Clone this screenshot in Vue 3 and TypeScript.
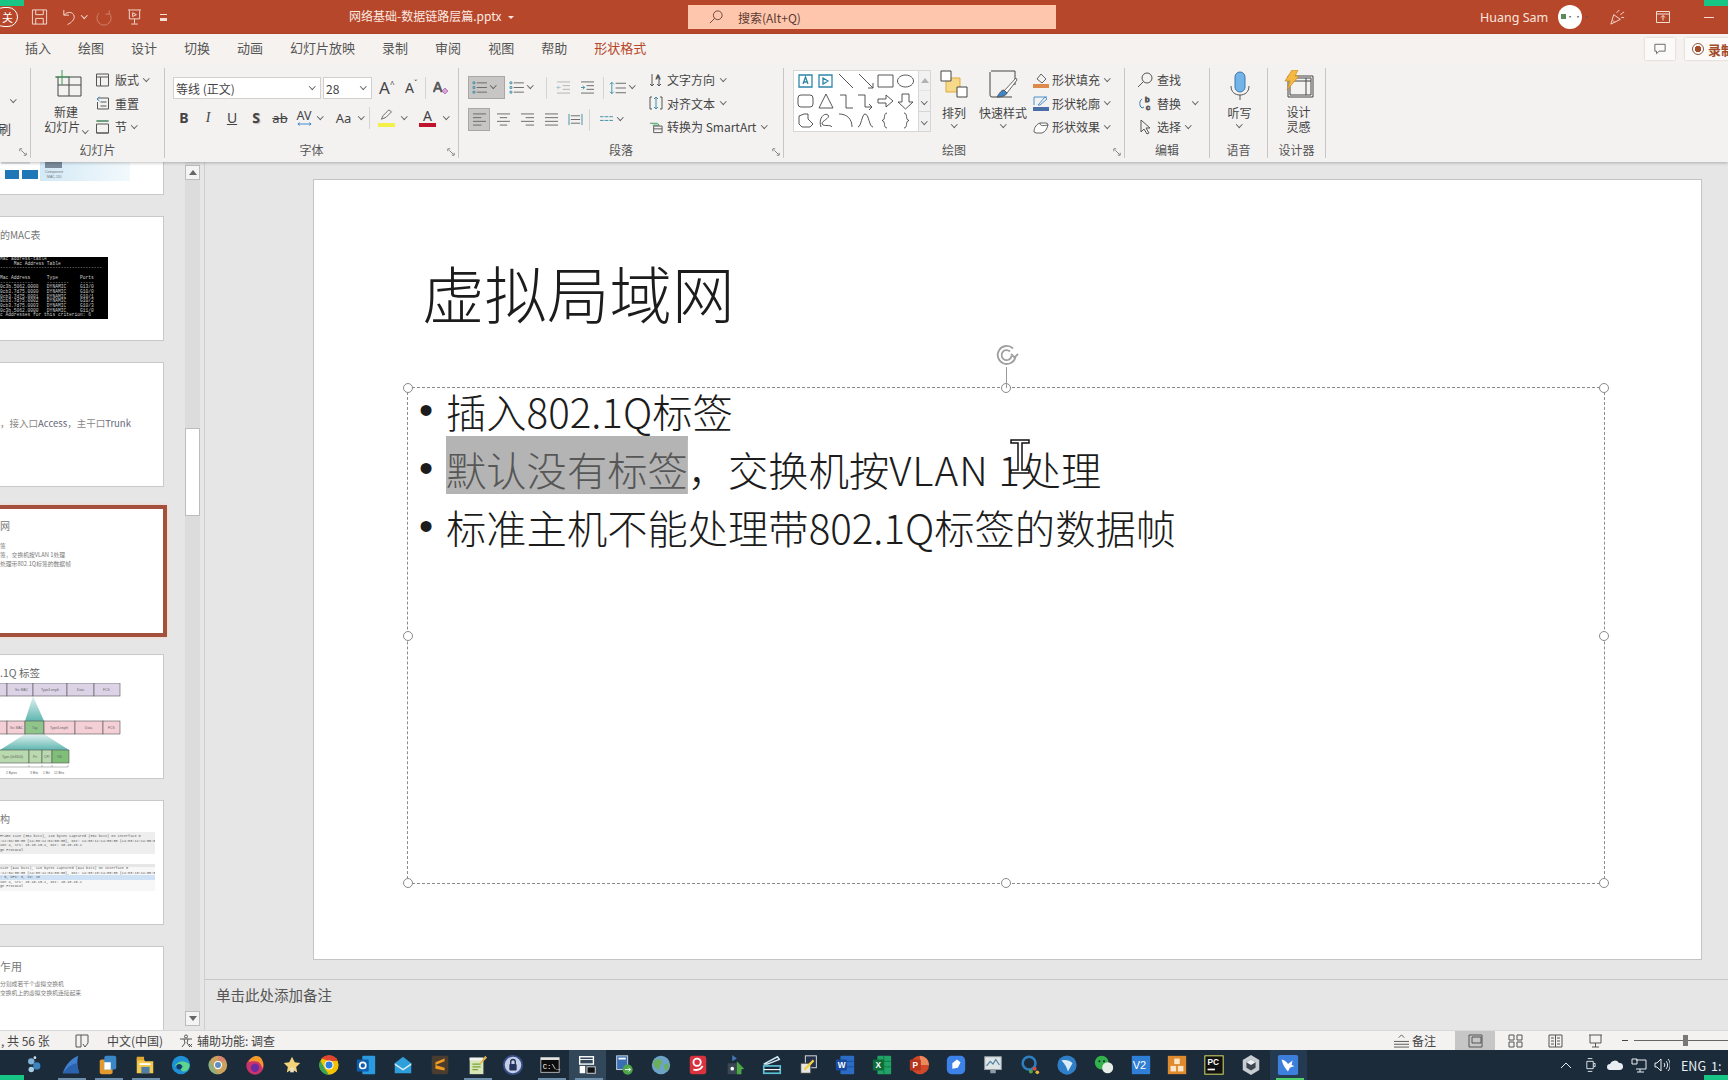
<script setup lang="ts">
const tabs = ['插入', '绘图', '设计', '切换', '动画', '幻灯片放映', '录制', '审阅', '视图', '帮助']

// 形状库，每格 20x19
const shapes = [
  'M3 3h13v12H3z M7 12l2.500-7 2.500 7 M8 10h3', 'M3 3h13v12H3z M7 6l5 3-5 3z', 'M3 2l14 14', 'M3 2l14 14 M12 16h5v-5', 'M2 3h15v12H2z', 'M9.500 3a8 6 0 1 0 .01 0z',
  'M5 3h9a3 3 0 0 1 3 3v6a3 3 0 0 1-3 3H5a3 3 0 0 1-3-3V6a3 3 0 0 1 3-3z', 'M10 2l7 14H3z', 'M4 3h6v13h7', 'M2 3h7v12h6 M13 12l3 3-3 3', 'M2 7h8V3l7 6-7 6v-4H2z', 'M6 2h7v8h4l-7.500 7L2 10h4z',
  'M3 5l5-2h4v5l5 5-3 3H6l-3-3z', 'M5 16C2 8 8 1 12 4c3 3-7 6-6 9 2 3 8 0 10 3', 'M3 3c8 0 13 5 13 13', 'M2 16C5 16 6 3 9 3c4 0 4 13 8 13', 'M11 2C7 2 10 9 6 9.500c4 .5 1 7.500 5 7.500', 'M8 2c4 0 1 7 5 7.500-4 .5-1 7.500-5 7.500',
]

const handles = [
  [0, 0], [50, 0], [100, 0], [0, 50], [100, 50], [0, 100], [50, 100], [100, 100],
]

const terminal = [
  'Mac address-table', '     Mac Address Table', '-------------------------------------',
  '', 'Mac Address      Type        Ports', '------------     --------    -----',
  '0c3b.5062.0000   DYNAMIC     G13/0', '0cb3.7d75.0000   DYNAMIC     G10/0', '0cb3.7d75.0001   DYNAMIC     G10/1',
  '0cb3.7d75.0002   DYNAMIC     G10/2', '0cb3.7d75.0003   DYNAMIC     G10/3', '0c3b.5062.0000   DYNAMIC     G11/0',
  'c Addresses for this criterion: 6',
]

// 任务栏图标，x 位置由 flex 顺序决定
const taskIcons: { body: string; run?: boolean; active?: boolean }[] = [
  { body: '<rect x="3" y="5" width="5" height="5" fill="#5c8fc0"/><rect x="3" y="13" width="5" height="5" fill="#3f77ad"/>' },
  { body: '<circle cx="9" cy="8" r="3.500" fill="#7fb2d9"/><circle cx="15" cy="13" r="4" fill="#3d83bd"/><circle cx="9" cy="17" r="3" fill="#a8cde6"/><circle cx="13" cy="4" r="1.500" fill="#d8e8f0"/>' },
  { run: true, body: '<path d="M3 21C6 12 12 5 20 2c-2 6-1 13 1 19z" fill="#3f7fd0"/><path d="M3 21c5-7 10-10 15-11l3 11z" fill="#2a62ad"/>' },
  { run: true, body: '<rect x="3" y="6" width="14" height="16" rx="2" fill="#e29a2e"/><rect x="8" y="2" width="13" height="15" rx="2" fill="#3b86c6"/><rect x="8" y="9" width="7" height="8" fill="#fff"/>' },
  { run: true, body: '<path d="M3 5h7l2 3h9v13H3z" fill="#f2c94c"/><rect x="3" y="3" width="8" height="4" fill="#e0a82e"/><rect x="8" y="14" width="9" height="7" fill="#4f7fa8"/><rect x="6" y="10" width="12" height="2" fill="#fff"/>' },
  { body: '<circle cx="12" cy="12" r="10" fill="#1f8fd6"/><path d="M5 14c2-6 11-8 16-3 1 5-3 9-7 8-3-1-3-5 1-5-3-3-7-3-10 0z" fill="#5fd68a"/><circle cx="10" cy="14" r="3" fill="#123a66"/>' },
  { body: '<circle cx="12" cy="12" r="10" fill="#c9a25e"/><path d="M12 2a10 10 0 0 1 9 6H12z" fill="#d98470"/><path d="M3 7l5 9 4 6a10 10 0 0 1-9-15z" fill="#8db07e"/><circle cx="12" cy="12" r="4.500" fill="#fff"/><circle cx="12" cy="12" r="3.300" fill="#5c8fc0"/>' },
  { body: '<circle cx="12" cy="13" r="9.500" fill="#c8336a"/><path d="M5 9c2-6 8-8 12-6 4 3 5 9 3 13-1-5-4-8-8-8-3 0-5 0-7 1z" fill="#f49a2d"/><circle cx="12" cy="15" r="4.500" fill="#6a2ca0"/>' },
  { body: '<path d="M12 3l3 6 6 .8-4.500 4.300 1.200 6L12 17l-5.700 3.100 1.200-6L3 9.800 9 9z" fill="#f2d37a"/><path d="M10 15h4v5h-4z" fill="#e9e2c9"/>' },
  { body: '<circle cx="12" cy="12" r="10.500" fill="#f2c200"/><path d="M12 1.500a10.500 10.500 0 0 1 9.500 6H12L4 5a10.500 10.500 0 0 1 8-3.500z" fill="#e0452e"/><path d="M2.500 7l5 9 4.500 6.500A10.500 10.500 0 0 1 2.500 7z" fill="#3aa655"/><circle cx="12" cy="12" r="5" fill="#fff"/><circle cx="12" cy="12" r="3.800" fill="#2b7de0"/>' },
  { body: '<rect x="8" y="2" width="14" height="20" rx="1" fill="#2b9be0"/><rect x="2" y="6" width="13" height="13" rx="1" fill="#0f5fb0"/><circle cx="8.500" cy="12.500" r="3.300" fill="none" stroke="#fff" stroke-width="1.800"/>' },
  { body: '<path d="M3 10l9-7 9 7v11H3z" fill="#2f9fdc"/><path d="M3 10l9 6 9-6v2l-9 6-9-6z" fill="#d8f0fa"/>' },
  { body: '<rect x="3" y="2" width="18" height="20" rx="2" fill="#4a3d30"/><path d="M7 9l10-4v3L7 12zM7 12l10 3v3L7 16z" fill="#f29a1f"/>' },
  { run: true, body: '<path d="M4 4h15v18H4z" fill="#d9e6b8"/><path d="M4 4h15v3H4z" fill="#f4f4f4"/><path d="M7 11h9M7 14h9M7 17h6" stroke="#7ca338" stroke-width="1.200"/><path d="M21 2l-6 8 1 1 7-7z" fill="#e4b545"/>' },
  { body: '<circle cx="12" cy="12" r="10" fill="#c7cfe6" stroke="#384f8a" stroke-width="2"/><rect x="8" y="11" width="8" height="7" rx="1" fill="#25345f"/><path d="M9.500 11V8.500a2.500 2.500 0 0 1 5 0V11" fill="none" stroke="#25345f" stroke-width="1.500"/>' },
  { run: true, body: '<rect x="2" y="4" width="20" height="16" fill="#0c0c0c" stroke="#bbb"/><rect x="2" y="4" width="20" height="2.500" fill="#e6e6e6"/><text x="4" y="16" font-family="Liberation Mono" font-size="8" fill="#fff">C:\\_</text>' },
  { run: true, active: true, body: '<rect x="4" y="3" width="15" height="8" fill="none" stroke="#fff" stroke-width="1.500"/><path d="M4 6h15" stroke="#fff"/><rect x="4" y="13" width="6" height="8" fill="#fff"/><rect x="12" y="14" width="9" height="7" fill="#111" stroke="#ddd"/>' },
  { body: '<rect x="4" y="2" width="12" height="15" fill="#3a6fb5" stroke="#cfd8e6"/><rect x="6" y="4" width="8" height="2" fill="#fff"/><circle cx="16" cy="17" r="5.500" fill="#4fa64a"/><path d="M13 17h6M17 15l2 2-2 2" stroke="#fff" fill="none"/>' },
  { body: '<circle cx="12" cy="12" r="10" fill="#6ea3c9"/><path d="M4 8c4-4 8-3 9 0s-3 5-3 9c-4 0-7-4-6-9zM15 12l5-2c1 4 0 7-3 9z" fill="#6bb05c"/>' },
  { body: '<rect x="3" y="2" width="18" height="20" rx="3" fill="#d8333f"/><circle cx="11" cy="9" r="4" fill="none" stroke="#fff" stroke-width="2"/><path d="M7 17c4 1 8 0 10-4" stroke="#fff" stroke-width="2" fill="none"/>' },
  { body: '<path d="M9 1v7l5-3z" fill="#4478b8"/><path d="M4 10h10v12H4z" fill="#3a4652"/><circle cx="9" cy="16" r="2" fill="#fff"/><path d="M14 8l8 8-3 1v5h-5z" fill="#4ca845"/>' },
  { body: '<path d="M3 11l15-8 2 3-13 5z" fill="none" stroke="#cfeaf2" stroke-width="1.600"/><rect x="3" y="13" width="18" height="8" fill="none" stroke="#59c4d8" stroke-width="1.800"/><path d="M3 17h18" stroke="#fff" stroke-width="1.200"/>' },
  { body: '<rect x="8" y="2" width="12" height="13" fill="#26324a" stroke="#e6e6e6"/><rect x="3" y="10" width="11" height="11" fill="#e6e6e6" stroke="#333"/><path d="M7 17l10-10" stroke="#f2d33f" stroke-width="2.500"/>' },
  { body: '<rect x="7" y="2" width="15" height="20" rx="1" fill="#2b6cc4"/><path d="M7 8h15M7 14h15" stroke="#1a4f9c"/><rect x="2" y="6" width="12" height="12" rx="1" fill="#174a9e"/><text x="4" y="15.500" font-family="Liberation Sans" font-weight="700" font-size="9" fill="#fff">W</text>' },
  { body: '<rect x="7" y="2" width="15" height="20" rx="1" fill="#21a366"/><path d="M7 8h15M7 14h15M14 2v20" stroke="#107c41"/><rect x="2" y="6" width="12" height="12" rx="1" fill="#0e6b3a"/><text x="5" y="15.500" font-family="Liberation Sans" font-weight="700" font-size="9" fill="#fff">X</text>' },
  { body: '<circle cx="13" cy="12" r="10" fill="#d0492a"/><path d="M13 2a10 10 0 0 1 10 10H13z" fill="#ed8a5c"/><rect x="2" y="6" width="12" height="12" rx="1" fill="#b7351c"/><text x="5" y="15.500" font-family="Liberation Sans" font-weight="700" font-size="9" fill="#fff">P</text>' },
  { body: '<rect x="2" y="2" width="20" height="20" rx="5" fill="#3c82e8"/><path d="M8 16l0-6 5-4 4 3-3 6z" fill="#fff"/>' },
  { body: '<rect x="3" y="3" width="18" height="14" fill="#dfe4e6" stroke="#9aa6ad"/><path d="M5 13l4-5 3 3 3-5 4 6" fill="none" stroke="#4a7f9e" stroke-width="1.300"/><path d="M9 17h6v4H9z" fill="#8f9ba2"/>' },
  { body: '<circle cx="11" cy="10" r="7" fill="none" stroke="#2e7fc0" stroke-width="2.800"/><circle cx="17" cy="16" r="2.200" fill="#d94f3a"/><circle cx="13" cy="19" r="2.200" fill="#4fa64a"/><circle cx="20" cy="20" r="2" fill="#e9b43a"/>' },
  { body: '<circle cx="12" cy="12" r="10.500" fill="#2f7fc8"/><path d="M6 7c5-1 9 0 12 3l-5 9c-1-4-3-8-7-12z" fill="#d9ecfa"/>' },
  { body: '<circle cx="9.500" cy="9.500" r="7.500" fill="#33b24a"/><circle cx="16" cy="15" r="6" fill="#e6ece8"/><circle cx="7" cy="8" r="1.100" fill="#124"/><circle cx="12" cy="8" r="1.100" fill="#124"/>' },
  { body: '<rect x="2" y="2" width="20" height="20" fill="#2f7fd6"/><text x="3" y="16" font-family="Liberation Sans" font-size="12" fill="#fff">V2</text>' },
  { body: '<rect x="2" y="2" width="20" height="20" fill="#e08a2e"/><rect x="9" y="5" width="6" height="6" fill="#fbe6c8"/><rect x="5" y="13" width="6" height="6" fill="#fbe6c8"/><rect x="13" y="13" width="6" height="6" fill="#fbe6c8"/>' },
  { body: '<rect x="2" y="2" width="20" height="20" fill="#111" stroke="#e8f06a"/><text x="5" y="12" font-family="Liberation Sans" font-weight="700" font-size="9" fill="#fff">PC</text><rect x="5" y="16" width="8" height="1.800" fill="#fff"/>' },
  { body: '<path d="M12 1l9 5.500v11L12 23l-9-5.500v-11z" fill="#c8cdd2"/><path d="M12 6l5 3v6l-5 3-5-3V9z" fill="#3e4650"/><path d="M12 6l5 3-5 3-5-3z" fill="#eef0f2"/>' },
  { run: true, active: true, body: '<rect x="1" y="1" width="22" height="22" rx="2" fill="#3d7fdc"/><path d="M5 6c4 1 6 3 7 5l5-4-1 5 3 1-5 2-2 4c-3-3-6-8-7-13z" fill="#fff"/>' },
]
</script>

<template>
  <div class="app">
    <header class="titlebar">
      <span class="corner corner-l"></span>
      <span class="corner corner-r"></span>
      <span class="autosave">关</span>
      <div class="qat">
        <svg class="q-save" viewBox="0 0 18 18"><path d="M1.500 1.500h15v15h-15z M5 1.500v5h8v-5 M5 16.500v-6h8v6" /></svg>
        <svg class="q-undo" viewBox="0 0 16 18"><path d="M3 1.500v5.500h5.500 M3.500 7C6 3 13 3 14 8c.7 4-3 7-7 9" /></svg>
        <i class="chev chev-w"></i>
        <svg class="q-redo" viewBox="0 0 18 18"><path d="M3 5a7.500 7.500 0 1 0 11 0M14 2v4h-4" /></svg>
        <svg class="q-show" viewBox="0 0 16 18"><path d="M1 1.500h14 M2.500 2v9h11V2 M8 11v5 M4.500 16.500h7 M6 4.500l4 2-4 2z" /></svg>
        <i class="q-more"></i>
      </div>
      <div class="doc">网络基础-数据链路层篇.pptx<i class="tri"></i></div>
      <div class="search">
        <svg viewBox="0 0 16 16"><circle cx="10" cy="6" r="5" /><path d="M6.500 9.500L1 15" /></svg>
        <span>搜索(Alt+Q)</span>
      </div>
      <div class="account">
        <span class="user">Huang Sam</span>
        <span class="avatar"><b></b>····</span>
        <svg class="pen" viewBox="0 0 18 18"><path d="M2 16l3-10 7 5zM8 4l3-3M12 6l4-3M13 9h3M6 14l-2-2" /></svg>
        <svg class="display" viewBox="0 0 14 12"><path d="M.5.500h13v11H.5z M.5 3h13 M7 9.500V4.500 M5 6.500l2-2 2 2" /></svg>
        <i class="minimize"></i>
      </div>
    </header>

    <section class="ribbon">
      <nav class="tabs">
        <span v-for="t in tabs" :key="t">{{ t }}</span>
        <span class="tab-format">形状格式</span>
        <div class="tab-actions">
          <button class="comment-btn"><svg viewBox="0 0 14 14"><path d="M1 1.500h12v8H6l-3 3v-3H1z" /></svg></button>
          <button class="record-btn"><i></i>录制</button>
        </div>
      </nav>

      <div class="groups">
        <div class="group g-clip">
          <div class="clip-body"><i class="chev"></i><span>刷</span></div>
          <div class="group-label"></div>
          <svg class="launch" viewBox="0 0 10 10"><path d="M1 4V1h3M9 6v3H6M3 3l5 5" /></svg>
        </div>

        <div class="group g-slides">
          <div class="group-body">
            <div class="big b-new">
              <svg class="i-new" viewBox="0 0 28 27">
                <path class="dark" d="M2 7h25v19H4V7 M15 7v19 M4 15h23" />
                <path class="green" d="M8 0v15M1 7h15" />
              </svg>
              <span>新建</span>
              <span>幻灯片<i class="chev"></i></span>
            </div>
            <div class="stack">
              <div class="small"><svg viewBox="0 0 14 14"><path d="M1 1h12v12H1z M1 4h12 M5 4v9" /></svg>版式<i class="chev"></i></div>
              <div class="small"><svg viewBox="0 0 14 14"><path d="M3 2h10v11H2V6 M5 6h6 M5 10h6" /><path class="blue" d="M4 1L1.500 3 4 5" /></svg>重置</div>
              <div class="small"><svg viewBox="0 0 14 14"><path d="M1 1h12 M1 4h12v9H1z M1 13h12" /><path class="green" d="M1 1h12" /></svg>节<i class="chev"></i></div>
            </div>
          </div>
          <div class="group-label">幻灯片</div>
        </div>

        <div class="group g-font">
          <div class="group-body col">
            <div class="font-row">
              <div class="select s-name"><span>等线 (正文)</span><i class="chev"></i></div>
              <div class="select s-size"><span>28</span><i class="chev"></i></div>
              <span class="grow">A<sup>^</sup></span>
              <span class="shrink">A<sup>ˇ</sup></span>
              <i class="vsep"></i>
              <svg class="i-clear" viewBox="0 0 16 16"><text x="0" y="12" font-family="Liberation Sans" font-size="14" fill="#555">A</text><path d="M9 11l3-3 3 3-3 3z" fill="#d7a6d8" stroke="#a35aa8" /></svg>
            </div>
            <div class="font-row fmt">
              <b class="f">B</b>
              <em class="f">I</em>
              <u class="f">U</u>
              <span class="f f-s">S</span>
              <s class="f">ab</s>
              <span class="f f-av">AV<svg viewBox="0 0 16 4"><path d="M1 2h14M3 .5L1 2l2 1.500M13 .5L15 2l-2 1.500" /></svg></span>
              <i class="chev"></i>
              <span class="f f-aa">Aa</span>
              <i class="chev"></i>
              <i class="vsep"></i>
              <span class="f-color">
                <svg viewBox="0 0 16 14"><path d="M3 11l2-4 6-6 3 2-6 6z" /></svg>
                <i class="bar yellow"></i>
              </span>
              <i class="chev"></i>
              <span class="f-color f-a">A<i class="bar red"></i></span>
              <i class="chev"></i>
            </div>
          </div>
          <div class="group-label">字体</div>
          <svg class="launch" viewBox="0 0 10 10"><path d="M1 4V1h3M9 6v3H6M3 3l5 5" /></svg>
        </div>

        <div class="group g-para">
          <div class="group-body">
            <div class="para-left">
              <div class="para-row">
                <span class="btn-on p-bullet">
                  <svg viewBox="0 0 16 14"><path class="thin" d="M5 2h11M5 7h11M5 12h11" /><path class="teal" d="M1 1h2v2H1zM1 6h2v2H1zM1 11h2v2H1z" /></svg>
                  <i class="chev"></i>
                </span>
                <span class="p-num">
                  <svg viewBox="0 0 16 14"><path class="thin" d="M5 2h11M5 7h11M5 12h11" /><path class="teal" d="M1 1h2v2H1zM1 6h2v2H1zM1 11h2v2H1z" /></svg>
                  <i class="chev"></i>
                </span>
                <i class="vsep"></i>
                <svg class="p-i faded" viewBox="0 0 16 14"><path class="thin" d="M1 1h14M7 5h8M7 9h8M1 13h14" /><path class="teal" d="M5 7H1M3 5L1 7l2 2" /></svg>
                <svg class="p-i" viewBox="0 0 16 14"><path class="thin" d="M1 1h14M7 5h8M7 9h8M1 13h14" /><path class="teal" d="M1 7h4M3 5l2 2-2 2" /></svg>
                <i class="vsep"></i>
                <span class="p-line">
                  <svg viewBox="0 0 18 14"><path class="thin" d="M7 2h11M7 7h11M7 12h11" /><path class="teal" d="M3 1v12M1 3l2-2 2 2M1 11l2 2 2-2" /></svg>
                  <i class="chev"></i>
                </span>
              </div>
              <div class="para-row r2">
                <span class="btn-on p-left"><svg viewBox="0 0 16 14"><path class="thin" d="M1 1h14M1 5h9M1 9h14M1 13h9" /></svg></span>
                <svg class="p-a first-a" viewBox="0 0 16 14"><path class="thin" d="M1 1h14M4 5h8M1 9h14M4 13h8" /></svg>
                <svg class="p-a" viewBox="0 0 16 14"><path class="thin" d="M1 1h14M6 5h9M1 9h14M6 13h9" /></svg>
                <svg class="p-a" viewBox="0 0 16 14"><path class="thin" d="M1 1h14M1 5h14M1 9h14M1 13h14" /></svg>
                <svg class="p-a" viewBox="0 0 16 14"><path class="teal" d="M1 1v12M15 1v12" /><path class="thin" d="M3 3h10M3 7h10M3 11h10" /></svg>
                <i class="vsep"></i>
                <span class="p-cols">
                  <svg viewBox="0 0 16 14"><path class="teal" d="M1 4h4M6 4h4M11 4h4M1 8h4M6 8h4M11 8h4" /></svg>
                  <i class="chev"></i>
                </span>
              </div>
            </div>
            <div class="stack s-text">
              <div class="small"><svg viewBox="0 0 14 14"><path d="M3 1v12M1 11l2 2 2-2 M10 6v7M8 11l2 2 2-2" /><text x="7" y="6" font-size="6" fill="#2a7fb8" font-family="Liberation Sans">A</text></svg>文字方向<i class="chev"></i></div>
              <div class="small"><svg viewBox="0 0 14 14"><path d="M3 1H1v12h2M11 1h2v12h-2" /><path class="teal" d="M7 1v12M5 3l2-2 2 2M5 11l2 2 2-2" /></svg>对齐文本<i class="chev"></i></div>
              <div class="small"><svg viewBox="0 0 15 14"><path class="green" d="M1 3h8l2 2H4" /><path d="M5 6h9v7H5z M5 9h9" /></svg>转换为 SmartArt<i class="chev"></i></div>
            </div>
          </div>
          <div class="group-label">段落</div>
          <svg class="launch" viewBox="0 0 10 10"><path d="M1 4V1h3M9 6v3H6M3 3l5 5" /></svg>
        </div>

        <div class="group g-draw">
          <div class="group-body">
            <div class="gallery">
              <div class="gallery-grid">
                <svg v-for="(d, i) in shapes" :key="i" viewBox="0 0 20 19" :class="{ 'tb-shape': i < 2 }"><path :d="d" /></svg>
              </div>
              <div class="gallery-scroll">
                <span class="faded"><i class="up"></i></span>
                <span><i class="chev"></i></span>
                <span class="more"><i class="chev"></i></span>
              </div>
            </div>
            <div class="big b-arrange">
              <svg viewBox="0 0 28 28">
                <path d="M6 8h14v14H6z" fill="#f7d98a" stroke="#dfa93a" />
                <path class="dark" d="M1 1h10v10H1z M17 17h10v10H17z" fill="#fff" />
              </svg>
              <span>排列</span>
              <i class="chev"></i>
            </div>
            <div class="big b-style">
              <svg viewBox="0 0 30 28">
                <path class="dark" d="M3 1h24v14 M24 27H4a2 2 0 0 1-2-2V2" />
                <path d="M28 8L16 21l3 2 10-13z" fill="#fff" stroke="#666" />
                <path d="M16 20c-3 0-5 4-7 7 4 0 9-1 10-4z" fill="#3a86c8" />
              </svg>
              <span>快速样式</span>
              <i class="chev"></i>
            </div>
            <div class="stack s-fill">
              <div class="small"><svg viewBox="0 0 16 16"><path d="M4 7l4-5 5 5-4 4z" /><rect x="0" y="12" width="16" height="4" fill="#dd8a4a" stroke="none" /></svg>形状填充<i class="chev"></i></div>
              <div class="small"><svg viewBox="0 0 16 16"><path d="M1 10V2h13 M5 10l7-8 2 2-7 6z" stroke="#3a86c8" /><rect x="0" y="12" width="16" height="4" fill="#4a6fa8" stroke="none" /></svg>形状轮廓<i class="chev"></i></div>
              <div class="small"><svg viewBox="0 0 16 16"><path d="M1 13c0-5 3-8 6-9h6a2 2 0 0 1 2 2c-1 4-3 7-6 8H3z" fill="#fff" /><path d="M7 4c0 3 2 3 8 2" /></svg>形状效果<i class="chev"></i></div>
            </div>
          </div>
          <div class="group-label">绘图</div>
          <svg class="launch" viewBox="0 0 10 10"><path d="M1 4V1h3M9 6v3H6M3 3l5 5" /></svg>
        </div>

        <div class="group g-edit">
          <div class="group-body">
            <div class="stack">
              <div class="small"><svg viewBox="0 0 16 16"><circle cx="10" cy="6" r="5" /><path d="M6.500 9.500L1 15" /></svg>查找</div>
              <div class="small"><svg viewBox="0 0 16 16"><path class="blue" d="M5 4C2 6 2 11 5 13M3 11l2 2 2-1" /><text x="8" y="7" font-size="8" fill="#8a4fb0" font-family="Liberation Sans">b</text><text x="9" y="15" font-size="8" fill="#2a7fb8" font-family="Liberation Sans">c</text></svg>替换<i class="chev c-far"></i></div>
              <div class="small"><svg viewBox="0 0 16 16"><path d="M4 1v12l3-3 3 5 2-1-3-5h4z" /></svg>选择<i class="chev"></i></div>
            </div>
          </div>
          <div class="group-label">编辑</div>
        </div>

        <div class="group g-voice">
          <div class="group-body">
            <div class="big b-mic">
              <svg viewBox="0 0 20 30">
                <rect x="5" y="1" width="10" height="20" rx="5" fill="#72b3e8" stroke="#3f78ad" />
                <path d="M1 15c0 6 4 9 9 9s9-3 9-9 M10 24v5" />
              </svg>
              <span>听写</span>
              <i class="chev"></i>
            </div>
          </div>
          <div class="group-label">语音</div>
        </div>

        <div class="group g-design">
          <div class="group-body">
            <div class="big b-idea">
              <svg viewBox="0 0 30 28">
                <path class="dark" d="M4 6h25v21H4z M6 8h21v17H6z M22 8v17 M6 11h21" />
                <path d="M8 0h6l-3 6h4L3 20l3-9H1z" fill="#f5b942" stroke="#c98a24" stroke-width=".7" />
              </svg>
              <span>设计</span>
              <span>灵感</span>
            </div>
          </div>
          <div class="group-label">设计器</div>
        </div>
      </div>
    </section>

    <main class="workspace">
      <aside class="pane">
        <div class="thumbs">
          <div class="card c1">
            <svg viewBox="0 0 163 20" width="163" height="20">
              <defs>
                <linearGradient id="fade" x1="0" y1="0" x2="1" y2="0">
                  <stop offset="0" stop-color="#d3e9f6" />
                  <stop offset="1" stop-color="#f2f9fc" />
                </linearGradient>
              </defs>
              <rect x="40" y="0" width="90" height="19" fill="url(#fade)" />
              <rect x="1" y="0" width="29" height="2" fill="#dfe4e8" />
              <rect x="5" y="8" width="14" height="9" fill="#1f77b8" />
              <rect x="22" y="8" width="16" height="9" fill="#1f77b8" />
              <rect x="45" y="0" width="17" height="6" fill="#7a8a9a" />
              <text x="45" y="11" font-size="3.500" fill="#777" font-family="Liberation Sans">Component</text>
              <text x="47" y="16" font-size="3.500" fill="#777" font-family="Liberation Sans">MAC-110</text>
            </svg>
          </div>

          <div class="card">
            <div class="t-title">的MAC表</div>
            <pre class="terminal"><span v-for="(l, i) in terminal" :key="i">{{ l }}<br /></span></pre>
          </div>

          <div class="card c3">
            <div class="t-line">，接入口<span>Access</span>，主干口<span>Trunk</span></div>
          </div>

          <div class="card current">
            <div class="t-title">网</div>
            <div class="t-small first">签</div>
            <div class="t-small">签，交换机按VLAN 1处理</div>
            <div class="t-small">处理带802.1Q标签的数据帧</div>
          </div>

          <div class="card">
            <div class="t-title q">.1Q 标签</div>
            <svg class="diagram" viewBox="0 0 163 100" width="163" height="100">
              <defs>
                <linearGradient id="teal" x1="0" y1="0" x2="0" y2="1">
                  <stop offset="0" stop-color="#e2f3f1" />
                  <stop offset="1" stop-color="#5fb5b0" />
                </linearGradient>
              </defs>
              <path d="M33 13L25 38h19z" fill="url(#teal)" />
              <path d="M25 51L0 67h69L44 51z" fill="url(#teal)" />
              <g class="d-row" fill="#dcd3e6">
                <rect x="-4" y="0" width="11" height="13" /><rect x="7" y="0" width="26" height="13" /><rect x="33" y="0" width="34" height="13" /><rect x="67" y="0" width="27" height="13" /><rect x="94" y="0" width="26" height="13" />
              </g>
              <g class="d-row" fill="#f4cfd6">
                <rect x="-4" y="38" width="11" height="13" /><rect x="7" y="38" width="18" height="13" /><rect x="25" y="38" width="19" height="13" fill="#8fc48a" /><rect x="44" y="38" width="31" height="13" /><rect x="75" y="38" width="28" height="13" /><rect x="103" y="38" width="17" height="13" />
              </g>
              <g class="d-row" fill="#b9d9ae">
                <rect x="-4" y="67" width="33" height="13" /><rect x="29" y="67" width="13" height="13" /><rect x="42" y="67" width="10" height="13" /><rect x="52" y="67" width="17" height="13" fill="#7fbf78" />
              </g>
              <g class="d-text">
                <text x="15" y="8">Src MAC</text><text x="41" y="8">Type/Length</text><text x="77" y="8">Data</text><text x="103" y="8">FCS</text>
                <text x="10" y="46">Src MAC</text><text x="32" y="46">Tag</text><text x="50" y="46">Type/Length</text><text x="85" y="46">Data</text><text x="108" y="46">FCS</text>
                <text x="2" y="75">Type (0x8100)</text><text x="33" y="75">Pri</text><text x="44" y="75">CFI</text><text x="57" y="75">VID</text>
                <text x="6" y="91">2 Bytes</text><text x="30" y="91">3 Bits</text><text x="43" y="91">1 Bit</text><text x="54" y="91">12 Bits</text>
              </g>
              <path d="M0 84H68M29 82v2M42 82v2M52 82v2M68 82v2" stroke="#777" stroke-width=".5" fill="none" />
            </svg>
          </div>

          <div class="card">
            <div class="t-title">构</div>
            <div class="capture">
              <div>Frame size (352 bits), 110 bytes captured (352 bits) on interface 0</div>
              <div>:12:04:00:00 (ca:03:12:04:00:00), Dst: ca:03:12:ca:00:00 (ca:03:12:ca:00:00)</div>
              <div>ion 4, Src: 10.10.10.1, Dst: 10.10.10.2</div>
              <div>ge Protocol</div>
            </div>
            <div class="capture c2">
              <div>size (944 bits), 118 bytes captured (944 bits) on interface 0</div>
              <div>:12:04:00:00 (ca:03:12:04:00:00), Dst: ca:03:13:ca:00:00 (ca:03:13:ca:00:00)</div>
              <div class="hl">: 0, CFI: 0, ID: 10</div>
              <div>ion 4, Src: 10.10.10.1, Dst: 10.10.10.2</div>
              <div>ge Protocol</div>
            </div>
          </div>

          <div class="card">
            <div class="t-title use">乍用</div>
            <div class="t-small first2">分割成若干个虚拟交换机</div>
            <div class="t-small">交换机上的虚拟交换机连接起来</div>
          </div>
        </div>

        <div class="scrollbar">
          <span class="sb-btn"><i class="up"></i></span>
          <div class="sb-track">
            <div class="sb-thumb"></div>
          </div>
          <span class="sb-btn"><i class="down"></i></span>
        </div>
      </aside>

      <div class="editor">
        <div class="stage">
          <div class="slide">
            <h1 class="slide-title">虚拟局域网</h1>
            <div class="textbox">
              <ul>
                <li><i>•</i>插入802.1Q标签</li>
                <li><i>•</i><span><mark>默认没有标签</mark>，交换机按<span class="vlan">VLAN 1</span>处理</span></li>
                <li><i>•</i>标准主机不能处理带802.1Q标签的数据帧</li>
              </ul>
              <span
                v-for="(h, i) in handles"
                :key="i"
                class="handle"
                :style="{ left: h[0] + '%', top: h[1] + '%' }"
              ></span>
              <div class="rotate">
                <svg viewBox="0 0 24 24">
                  <path d="M18 5.500A9 9 0 1 0 20.500 14" />
                  <path d="M15 8.500A5 5 0 1 0 16.500 13" />
                  <path d="M23 11l-3.500 3.500L16 11" />
                </svg>
                <i></i>
              </div>
              <svg class="ibeam" viewBox="0 0 20 35"><path d="M1 1h18v3h-7v27h7v3H1v-3h7V4H1z" /></svg>
            </div>
          </div>
        </div>
        <div class="notes">单击此处添加备注</div>
      </div>
    </main>

    <footer class="status">
      <div class="st-left">
        <span class="st-count">, 共 56 张</span>
        <svg class="st-book" viewBox="0 0 14 14"><path d="M1 1h5v12H1z M6 1h7v8 M8 10l2 3 3-4" /></svg>
        <span class="st-lang">中文(中国)</span>
        <svg class="st-acc" viewBox="0 0 14 14"><circle cx="7" cy="2.500" r="1.500" /><path d="M1 5h12M5 5l1 4-3 4M9 5L8 9l3 4M10 10l3 3M13 10l-3 3" /></svg>
        <span>辅助功能: 调查</span>
      </div>
      <div class="st-right">
        <svg class="st-notes" viewBox="0 0 18 16"><path d="M1 9h16M1 12h16M1 15h16M6 5l3-3 3 3" /></svg>
        <span class="st-notes-t">备注</span>
        <span class="view on"><svg viewBox="0 0 15 14"><path d="M1 1h13v12H1z M4 3h9v6H4z" /></svg></span>
        <span class="view"><svg viewBox="0 0 15 14"><path d="M1 1h5v5H1z M9 1h5v5H9z M1 8h5v5H1z M9 8h5v5H9z" /></svg></span>
        <span class="view"><svg viewBox="0 0 15 14"><path d="M1 1h13v12H1z M7.500 1v12 M3 4h3M3 7h3M3 10h3M9 4h3M9 7h3M9 10h3" /></svg></span>
        <span class="view"><svg viewBox="0 0 15 14"><path d="M1 1h13 M2 1v8h11V1 M7.500 9v4 M4 13h7" /></svg></span>
        <i class="zoom-minus"></i>
        <div class="zoom-track"><i></i></div>
      </div>
    </footer>

    <div class="taskbar">
      <span class="corner task-l"></span>
      <span class="corner task-r"></span>
      <div class="task-icons">
        <span v-for="(ic, i) in taskIcons" :key="i" class="task-icon" :class="{ run: ic.run, active: ic.active, last: i === taskIcons.length - 1 }">
          <svg viewBox="0 0 24 24" v-html="ic.body"></svg>
        </span>
      </div>
      <div class="tray">
        <svg class="t-chev" viewBox="0 0 12 8"><path d="M1 7l5-5 5 5" /></svg>
        <svg class="t-cam" viewBox="0 0 12 16"><path d="M2 4h7v8H2z M9 7l2-1v4l-2-1 M3 1h5M3 15h5" /></svg>
        <svg class="t-cloud" viewBox="0 0 16 10"><path class="fill" d="M3 10a3 3 0 0 1 0-6 5 5 0 0 1 9-1 3.500 3.500 0 0 1 1 7z" /></svg>
        <svg class="t-net" viewBox="0 0 16 15"><path d="M5 2h10v9H5 M1 1h5v5H1z M9 11v3 M6 14h7" /></svg>
        <svg class="t-vol" viewBox="0 0 16 14"><path d="M1 5h2l4-4v12l-4-4H1z M10 5c1 1 1 3 0 4 M12 3c2 2 2 6 0 8 M14 1c3 3 3 9 0 12" /></svg>
        <span class="t-eng">ENG</span>
        <span class="t-time">1:</span>
      </div>
    </div>
  </div>
</template>

<style>
html, body { margin: 0; background: #e6e6e6; overflow: hidden; }
</style>

<style scoped>
* { box-sizing: border-box; }
.app {
  width: 1728px;
  height: 1080px;
  display: flex;
  flex-direction: column;
  overflow: hidden;
  font-family: "Noto Sans CJK SC", "Liberation Sans", sans-serif;
  color: #444;
  font-size: 12px;
}
svg { display: block; flex: none; fill: none; stroke: #555; stroke-width: 1; }
i { font-style: normal; }

.chev {
  display: inline-block;
  width: 4.500px;
  height: 4.500px;
  margin: -2px 0 2px 5px;
  border: solid #666;
  border-width: 0 1px 1px 0;
  transform: rotate(45deg);
  flex: none;
}
.dark { stroke: #444; }
.green { stroke: #3c9a5a; }
.blue { stroke: #2a7fb8; }
.teal { stroke: #3c8fa6; }
.thin { stroke: #666; }
.faded { opacity: .45; }
.vsep { width: 1px; height: 22px; background: #d4d4d4; flex: none; }

/* 标题栏 */
.titlebar {
  position: relative;
  height: 34px;
  flex: none;
  background: #b7472a;
  display: flex;
  align-items: center;
  color: #fff;
}
.corner { position: absolute; width: 24px; height: 6px; background: #17c585; }
.corner-l { left: 0; top: 0; }
.corner-r { right: 0; top: 0; }
.autosave {
  width: 24px;
  height: 20px;
  margin-left: -6px;
  border: 1px solid #fff;
  border-radius: 10px;
  font-size: 11px;
  line-height: 18px;
  text-align: right;
  padding-right: 4px;
}
.qat { display: flex; align-items: center; margin-left: 13px; }
.qat svg { stroke: #f6ded6; }
.q-save { width: 17px; height: 18px; }
.q-undo { width: 15px; height: 18px; margin-left: 13px; }
.chev-w { border-color: #f6ded6; margin-left: 6px; }
.q-redo { width: 17px; height: 18px; margin-left: 9px; opacity: .4; }
.q-show { width: 15px; height: 18px; margin-left: 14px; }
.q-more { width: 7px; height: 7px; margin-left: 18px; border-top: 1px solid #f6ded6; border-bottom: 3px solid #f6ded6; }
.doc { position: absolute; left: 349px; top: 7px; font-size: 12px; line-height: 18px; color: #fbe9e2; }
.tri { display: inline-block; margin-left: 7px; border: 3px solid transparent; border-top: 3px solid #fbe9e2; vertical-align: -1px; }
.search {
  position: absolute;
  left: 688px;
  top: 5px;
  width: 368px;
  height: 24px;
  background: #ffc6ae;
  display: flex;
  align-items: center;
  color: #5a3a30;
  font-size: 12px;
  padding-left: 21px;
}
.search svg { width: 14px; height: 14px; margin-right: 15px; stroke: #5a3a30; }
.account { position: absolute; left: 1480px; top: 0; height: 34px; display: flex; align-items: center; }
.user { font-size: 12.500px; width: 78px; color: #f9e6df; font-family: "Noto Sans", sans-serif; white-space: nowrap; }
.avatar {
  width: 24px;
  height: 24px;
  border-radius: 50%;
  background: #fff;
  color: #555;
  font-size: 8px;
  line-height: 24px;
  text-align: right;
  padding-right: 2px;
  white-space: nowrap;
  position: relative;
}
.avatar b { position: absolute; left: 3px; top: 9px; width: 5px; height: 5px; background: #5c8a5c; }
.pen { width: 17px; height: 17px; margin-left: 27px; stroke: #f6ded6; }
.display { width: 14px; height: 12px; margin-left: 30px; stroke: #f6ded6; }
.minimize { width: 10px; height: 1px; margin-left: 34px; background: #f6ded6; }

/* 功能区 */
.ribbon {
  height: 128px;
  flex: none;
  background: #f3f2f1;
  box-shadow: 0 1px 3px rgba(0, 0, 0, .25);
  position: relative;
  z-index: 2;
}
.tabs {
  height: 30px;
  background: #f6f2ef;
  display: flex;
  align-items: center;
  gap: 27px;
  padding: 0 0 4px 25px;
  font-size: 13px;
  color: #555;
  position: relative;
}
.tab-format { color: #b7472a; }
.tab-actions { position: absolute; left: 1645px; top: 4px; display: flex; gap: 10px; }
.tab-actions button {
  height: 22px;
  background: #fbfaf9;
  border: 0;
  box-shadow: 0 0 2px rgba(0, 0, 0, .2);
  padding: 0;
  display: flex;
  align-items: center;
  font: inherit;
}
.comment-btn { width: 30px; justify-content: center; }
.comment-btn svg { width: 12px; height: 12px; }
.record-btn { width: 60px; padding-left: 7px !important; color: #a54a28; font-size: 13px !important; font-weight: 700 !important; }
.record-btn i {
  width: 12px;
  height: 12px;
  margin-right: 4px;
  border: 1px solid #8b5a48;
  border-radius: 50%;
  background: radial-gradient(circle, #a54a28 0 3px, transparent 3.500px);
}

.groups { display: flex; padding-top: 4px; }
.group {
  position: relative;
  height: 90px;
  display: flex;
  flex-direction: column;
  border-right: 1px solid #c6c6c6;
  flex: none;
}
.group-body { height: 74px; display: flex; }
.group-body.col { flex-direction: column; }
.group-label { text-align: center; font-size: 12px; line-height: 17px; color: #555; }
.launch { position: absolute; right: 3px; bottom: 2px; width: 8px; height: 8px; stroke: #666; }

.g-clip { width: 31px; }
.clip-body { height: 74px; display: flex; flex-direction: column; padding-top: 26px; font-size: 13px; line-height: 16px; }
.clip-body .chev { margin: 3px 0 19px 11px; }
.clip-body span { margin-left: -2px; }
.g-slides { width: 134px; }
.g-font { width: 294px; }
.g-para { width: 325px; }
.g-draw { width: 341px; }
.g-edit { width: 85px; }
.g-voice { width: 58px; }
.g-design { width: 58px; }

.big { display: flex; flex-direction: column; align-items: center; font-size: 12px; line-height: 15px; color: #444; flex: none; }
.big .chev { margin: 2px 0 0 0; }
.big svg { margin-top: 2px; margin-bottom: 7px; }
.b-new { width: 50px; margin-left: 10px; white-space: nowrap; }
.b-new svg { width: 28px; height: 27px; margin-left: 3px; }
.b-new .chev { margin-left: 3px; }

.stack { display: flex; flex-direction: column; margin-left: 4px; }
.small { height: 23.500px; display: flex; align-items: center; font-size: 12px; white-space: nowrap; color: #444; }
.small svg { width: 15px; height: 14px; margin-right: 5px; }
.small .c-far { margin-left: 12px; }

.font-row { display: flex; align-items: center; height: 22px; margin: 9px 0 0 8px; }
.select {
  height: 22px;
  background: #fff;
  border: 1px solid #d2d0ce;
  display: flex;
  align-items: center;
  justify-content: space-between;
  padding: 0 6px 0 2px;
  font-size: 12px;
  color: #444;
}
.s-name { width: 148px; margin-right: 2px; }
.s-size { width: 49px; }
.grow { font-size: 17px; margin-left: 7px; width: 26px; line-height: 20px; font-family: "Noto Sans", sans-serif; }
.shrink { font-size: 14px; width: 20px; line-height: 20px; font-family: "Noto Sans", sans-serif; }
.grow sup, .shrink sup { font-size: 8px; line-height: 0; }
.i-clear { width: 16px; height: 16px; margin-left: 7px; stroke-width: .7; }
.fmt { margin-top: 8px; margin-left: 7px; }
.f {
  width: 24px;
  text-align: center;
  font-family: "Noto Sans", "Liberation Sans", sans-serif;
  font-size: 14px;
  line-height: 20px;
  color: #444;
  flex: none;
}
em.f { font-family: "Liberation Serif", serif; }
.f-s { font-weight: 700; text-shadow: 1px 1px 1px #bbb; }
s.f { font-size: 13px; }
.f-av { font-size: 12.500px; line-height: 12px; display: flex; flex-direction: column; align-items: center; }
.f-av svg { width: 15px; height: 4px; stroke: #3a86c8; }
.f-aa { width: 26px; margin-left: 8px; font-size: 13px; }
.fmt .chev { margin-left: 2px; }
.fmt .vsep { margin: 0 7px 0 6px; }
.f-color { width: 18px; display: flex; flex-direction: column; align-items: center; }
.f-color svg { width: 16px; height: 13px; stroke: #666; }
.f-a { margin-left: 12px; line-height: 13px; font-size: 14px; font-family: "Noto Sans", sans-serif; }
.fmt .f-color + .chev { margin-left: 7px; }
.bar { display: block; width: 17px; height: 4px; margin-top: 1px; }
.yellow { background: #f4f04a; }
.red { background: #c0142c; }

.para-left { width: 181px; margin-left: 9px; }
.para-row { height: 23px; margin-top: 8px; display: flex; align-items: center; }
.para-row svg { width: 15px; height: 13px; }
.para-row .chev { margin-left: 4px; }
.r2 { margin-top: 9px; }
.btn-on { background: #c8c6c4; border: 1px solid #a9a7a5; display: flex; align-items: center; height: 23px; flex: none; }
.p-bullet { width: 37px; padding-left: 3px; }
.p-num { display: flex; align-items: center; width: 30px; margin-left: 4px; }
.p-num + .vsep { margin: 0 9px 0 7px; }
.p-i { margin-right: 9px; }
.p-i + .vsep { margin-right: 5px; margin-left: -1px; }
.p-line { display: flex; align-items: center; }
.p-line svg { width: 17px; height: 14px; }
.p-left { width: 22px; justify-content: center; }
.p-a { margin-left: 9px; }
.p-a.first-a { margin-left: 6px; }
.r2 .vsep { margin: 0 9px 0 6px; }
.p-cols { display: flex; align-items: center; }
.s-text { margin-left: 0; }
.s-text .small svg { width: 14px; margin-right: 4px; }
.s-text .small .chev { margin-left: 6px; }

.gallery {
  margin: 2px 0 0 9px;
  width: 138px;
  height: 62px;
  display: flex;
  background: #fff;
  border: 1px solid #d6d6d6;
}
.gallery-grid { width: 124px; display: grid; grid-template-columns: repeat(6, 20px); grid-auto-rows: 19.500px; padding: 1px 0 0 2px; }
.gallery-grid svg { width: 20px; height: 19px; stroke: #444; stroke-width: .9; }
.gallery-grid .tb-shape { stroke: #2f87a8; stroke-width: 1.300; }
.gallery-scroll { flex: 1; display: flex; flex-direction: column; background: #f1f1f1; border-left: 1px solid #d6d6d6; }
.gallery-scroll span { flex: 1; display: flex; justify-content: center; align-items: center; border-bottom: 1px solid #d6d6d6; }
.gallery-scroll span:last-child { border-bottom: 0; }
.gallery-scroll .chev { margin: 0; }
.up { width: 0; height: 0; border: 4px solid transparent; border-bottom: 5px solid #666; border-top: 0; }
.down { width: 0; height: 0; border: 4px solid transparent; border-top: 5px solid #666; border-bottom: 0; }
.b-arrange { width: 36px; margin-left: 5px; }
.b-arrange svg { width: 28px; height: 28px; }
.b-style { width: 54px; margin-left: 4px; white-space: nowrap; }
.b-style svg { width: 30px; height: 28px; }
.s-fill { margin-left: 3px; }
.s-fill .small svg { width: 16px; height: 16px; margin-right: 3px; stroke-width: .9; }
.g-edit .stack { margin-left: 12px; }
.g-edit .small svg { width: 16px; height: 16px; margin-right: 4px; }
.b-mic { width: 57px; margin-left: 1px; }
.b-mic svg { width: 20px; height: 30px; margin-bottom: 4px; margin-top: 3px; }
.b-idea { width: 57px; margin-left: 2px; }
.b-idea svg { width: 30px; height: 28px; margin-bottom: 6px; }
.g-voice .group-label, .g-design .group-label { white-space: nowrap; }

/* 主区域 */
.workspace { flex: 1; display: flex; min-height: 0; background: #e6e6e6; }
.pane { width: 205px; flex: none; display: flex; border-right: 1px solid #cfcfcf; }
.thumbs { width: 185px; flex: none; overflow: hidden; display: flex; flex-direction: column; gap: 21px; }
.card {
  width: 164px;
  height: 125px;
  flex: none;
  background: #fff;
  border: solid #c9c9c9;
  border-width: 1px 1px 1px 0;
  overflow: hidden;
  color: #777;
}
.c1 { height: 33px; border-top: 0; padding-top: 0; }
.c1 svg { stroke: none; }
.t-title { font-size: 10px; line-height: 12px; padding-top: 12px; color: #777; }
.terminal {
  width: 108px;
  height: 62px;
  margin: 16px 0 0;
  background: #000;
  color: #cfcfcf;
  font-family: "Liberation Mono", monospace;
  font-size: 4.600px;
  line-height: 4.700px;
  overflow: hidden;
}
.c3 { padding-top: 54px; }
.t-line { font-size: 9.500px; line-height: 12px; color: #888; white-space: nowrap; }
.t-line span { color: #667; }
.current {
  width: 167px;
  height: 132px;
  margin: -3px 0 -4px;
  border-width: 4px 4px 4px 0;
  border-color: #a5503d;
  box-shadow: 0 0 3px #f5cdbd;
}
.t-small { font-size: 5.800px; line-height: 9px; color: #777; white-space: nowrap; }
.current .t-title { padding-top: 11px; }
.first { margin-top: 9px; }
.first2 { margin-top: 7px; }
.q { padding-top: 12px; font-size: 10.500px; color: #666; }
.diagram { margin-top: 4px; stroke: none; }
.d-row rect { stroke: #555; stroke-width: .6; }
.d-text text { font-size: 3.300px; font-family: "Liberation Sans", sans-serif; fill: #666; stroke: none; }
.capture {
  width: 155px;
  height: 22px;
  margin-top: 7px;
  padding-top: 2px;
  background: #eee;
  font-family: "Liberation Mono", monospace;
  font-size: 3.500px;
  line-height: 4.600px;
  color: #555;
  white-space: nowrap;
  overflow: hidden;
}
.c2 { height: 27px; margin-top: 10px; background: linear-gradient(#e6e6e6 0 3px, #f7f7f7 3px); }
.hl { background: #cfe2f5; }
.use { padding-top: 13px; font-size: 11px; }

.scrollbar { width: 15px; flex: none; display: flex; flex-direction: column; background: #dcdcdc; padding-top: 3px; height: 864px; }
.sb-btn { height: 15px; flex: none; background: #f4f4f4; border: 1px solid #bcbcbc; display: flex; align-items: center; justify-content: center; }
.sb-track { flex: 1; padding-top: 248px; margin-bottom: 4px; }
.sb-thumb { height: 88px; background: #fff; border: 1px solid #bcbcbc; }

.editor { flex: 1; display: flex; flex-direction: column; min-width: 0; }
.stage { height: 817px; flex: none; padding: 17px 0 0 108px; overflow: hidden; }
.slide {
  width: 1389px;
  height: 781px;
  background: #fff;
  border: 1px solid #c4c4c4;
  padding: 72px 0 0 93px;
}
.slide-title {
  margin: 0 0 0 15px;
  font-size: 62.500px;
  font-weight: 300;
  line-height: 80px;
  color: #1c1c1c;
}
.textbox {
  position: relative;
  width: 1198px;
  height: 497px;
  margin-top: 55px;
  border: 1px dashed #8c8c8c;
}
.textbox ul { list-style: none; margin: -6px 0 0; padding: 0; }
.textbox li {
  display: flex;
  font-size: 40.300px;
  font-weight: 300;
  line-height: 58px;
  color: #1c1c1c;
  white-space: nowrap;
}
.textbox li > i { width: 38px; flex: none; padding-left: 11px; font-family: "Liberation Sans", sans-serif; }
.vlan { letter-spacing: .9px; }
mark {
  background: linear-gradient(#b4b4b4, #b4b4b4) no-repeat top / 100% 55px;
  box-shadow: 0 -3px 0 #b4b4b4;
  color: #575757;
}
.handle {
  position: absolute;
  width: 10px;
  height: 10px;
  margin: -5px 0 0 -5px;
  background: #fff;
  border: 1.500px solid #8a8a8a;
  border-radius: 50%;
}
.rotate { position: absolute; left: 50%; top: -45px; width: 24px; margin-left: -11px; display: flex; flex-direction: column; align-items: center; }
.rotate svg { width: 24px; height: 24px; stroke: #a0a0a0; stroke-width: 1.800; }
.rotate i { width: 1px; height: 21px; margin-left: -2px; background: #999; }
.ibeam { position: absolute; left: 602px; top: 51px; width: 20px; height: 35px; stroke: #111; fill: #fff; stroke-width: 1.500; }
.notes {
  flex: 1;
  border-top: 1px solid #c9c9c9;
  padding: 4px 0 0 11px;
  font-size: 14.500px;
  line-height: 22px;
  color: #555;
}

/* 状态栏 */
.status {
  height: 20px;
  flex: none;
  background: #f3f2f1;
  border-top: 1px solid #d8d8d8;
  display: flex;
  justify-content: space-between;
  align-items: center;
  font-size: 12px;
  color: #444;
  position: relative;
}
.st-left { display: flex; align-items: center; }
.st-count { width: 75px; padding-left: 1px; white-space: nowrap; }
.st-book { width: 14px; height: 14px; }
.st-lang { margin-left: 18px; width: 72px; }
.st-acc { width: 14px; height: 14px; margin-right: 4px; }
.st-right { display: flex; align-items: center; height: 100%; width: 335px; }
.st-notes { width: 17px; height: 15px; }
.st-notes-t { margin-left: 2px; width: 43px; }
.view { width: 40px; height: 100%; display: flex; align-items: center; justify-content: center; }
.view.on { background: #c6c6c6; }
.view svg { width: 15px; height: 14px; }
.zoom-minus { width: 6px; height: 1px; background: #444; margin: 0 6px 0 7px; flex: none; }
.zoom-track { flex: 1; height: 1px; background: #666; position: relative; }
.zoom-track i { position: absolute; left: 49px; top: -5px; width: 5px; height: 11px; background: #777; }

/* 任务栏 */
.taskbar {
  height: 30px;
  flex: none;
  background: #1c2b3a;
  position: relative;
  display: flex;
  align-items: stretch;
}
.task-l { left: 0; bottom: 0; height: 5px; z-index: 1; }
.task-r { right: 0; bottom: 0; height: 5px; }
.task-icons { display: flex; margin-left: -21.500px; }
.task-icon { width: 36.900px; height: 30px; display: flex; align-items: center; justify-content: center; position: relative; }
.task-icon svg { width: 22px; height: 22px; stroke: none; }
.task-icon.run::after { content: ""; position: absolute; left: 6px; right: 3px; bottom: 0; height: 2px; background: #6d8fac; }
.task-icon.active { background: #33475a; }
.task-icon.last { background: #243a50; }
.task-icon.last::after { background: #4fcf6a; }
.tray { position: absolute; left: 1560px; top: 0; height: 30px; display: flex; align-items: center; color: #e8eef2; }
.tray svg { stroke: #e8eef2; }
.t-chev { width: 12px; height: 8px; }
.t-cam { width: 11px; height: 16px; margin-left: 13px; }
.t-cloud { width: 16px; height: 10px; margin-left: 11px; }
.t-cloud .fill { fill: #e8eef2; stroke: none; }
.t-net { width: 16px; height: 15px; margin-left: 8px; }
.t-vol { width: 16px; height: 14px; margin-left: 7px; }
.t-eng { margin-left: 11px; font-size: 12.500px; width: 30px; }
.t-time { font-size: 12.500px; }
</style>
